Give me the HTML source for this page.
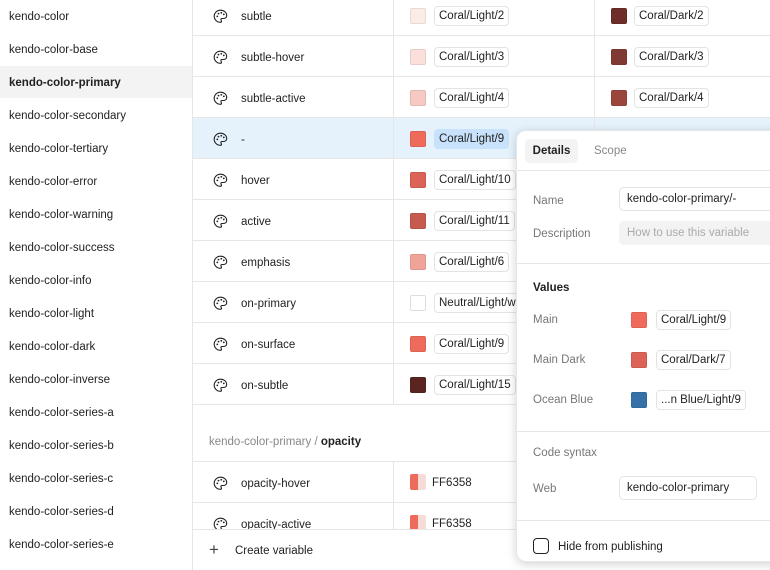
<!DOCTYPE html><html><head><style>
*{box-sizing:border-box;margin:0;padding:0}
body{width:770px;height:570px;overflow:hidden;background:#fff;font-family:"Liberation Sans",sans-serif;font-size:11.5px;line-height:14px;color:#222;position:relative}
.a{position:absolute}
.side{left:0;top:0;width:193px;height:570px;border-right:1px solid #e6e6e6}
.si{position:absolute;left:9px;line-height:14px}
.row{position:absolute;left:193px;width:577px;height:41px;border-bottom:1px solid #e6e6e6}
.row .ic{position:absolute;left:20px;top:14px}
.row .nm{position:absolute;left:48px;top:15px}
.c1{position:absolute;left:200px;top:0;height:41px;border-left:1px solid #e6e6e6}
.c2{position:absolute;left:401px;top:0;height:41px;border-left:1px solid #e6e6e6}
.sw{position:absolute;width:16px;height:16px;border-radius:2px;border:1px solid rgba(0,0,0,.08)}
.chip{position:absolute;height:20px;line-height:18px;padding:0 4px;border:1px solid #e3e3e3;border-radius:4px;background:#fff;white-space:nowrap}
.panel{left:516px;top:130px;width:270px;height:432px;background:#fff;border-radius:10px;box-shadow:0 2px 10px rgba(0,0,0,.18);border:1px solid #e6e6e6}
.lbl{position:absolute;left:16px;color:#777}
.hr{position:absolute;left:0;right:0;height:1px;background:#e6e6e6}
.inp{position:absolute;height:24px;border:1px solid #e3e3e3;border-radius:5px;line-height:22px;padding-left:7px}
</style></head><body>
<svg width="0" height="0" style="position:absolute"><defs><g id="pal"><path d="M7.5 1.2C4 1.2 1.2 4 1.2 7.3c0 3.3 2.8 6 6 6 .9 0 1.3-.5 1.3-1.1 0-.7-.6-.9-.6-1.6 0-.6.5-1.1 1.1-1.1h1.5c2 0 3.2-1.3 3.2-3C13.7 3.6 11 1.2 7.5 1.2z" fill="none" stroke="#222" stroke-width="1.1"/><circle cx="4.3" cy="7.4" r=".9" fill="#222"/><circle cx="5.5" cy="4.6" r=".9" fill="#222"/><circle cx="8.3" cy="3.8" r=".9" fill="#222"/><circle cx="10.8" cy="5.4" r=".9" fill="#222"/></g></defs></svg>
<div class="a side">
<div class="a" style="left:0;top:66px;width:192px;height:32px;background:#f3f3f3"></div>
<div class="si" style="top:10px">kendo-color</div>
<div class="si" style="top:43px">kendo-color-base</div>
<div class="si" style="top:76px;font-weight:bold">kendo-color-primary</div>
<div class="si" style="top:109px">kendo-color-secondary</div>
<div class="si" style="top:142px">kendo-color-tertiary</div>
<div class="si" style="top:175px">kendo-color-error</div>
<div class="si" style="top:208px">kendo-color-warning</div>
<div class="si" style="top:241px">kendo-color-success</div>
<div class="si" style="top:274px">kendo-color-info</div>
<div class="si" style="top:307px">kendo-color-light</div>
<div class="si" style="top:340px">kendo-color-dark</div>
<div class="si" style="top:373px">kendo-color-inverse</div>
<div class="si" style="top:406px">kendo-color-series-a</div>
<div class="si" style="top:439px">kendo-color-series-b</div>
<div class="si" style="top:472px">kendo-color-series-c</div>
<div class="si" style="top:505px">kendo-color-series-d</div>
<div class="si" style="top:538px">kendo-color-series-e</div>
</div>

<div class="row" style="top:-5px"><svg class="ic" width="15" height="15"><use href="#pal"/></svg><span class="nm">subtle</span><div class="c1"></div><div class="c2"></div><div class="sw" style="left:217px;top:13px;background:#fcece8"></div><div class="chip" style="left:241px;top:11px">Coral/Light/2</div><div class="sw" style="left:418px;top:13px;background:#6e2d28"></div><div class="chip" style="left:441px;top:11px">Coral/Dark/2</div></div>
<div class="row" style="top:36px"><svg class="ic" width="15" height="15"><use href="#pal"/></svg><span class="nm">subtle-hover</span><div class="c1"></div><div class="c2"></div><div class="sw" style="left:217px;top:13px;background:#fadfda"></div><div class="chip" style="left:241px;top:11px">Coral/Light/3</div><div class="sw" style="left:418px;top:13px;background:#813a33"></div><div class="chip" style="left:441px;top:11px">Coral/Dark/3</div></div>
<div class="row" style="top:77px"><svg class="ic" width="15" height="15"><use href="#pal"/></svg><span class="nm">subtle-active</span><div class="c1"></div><div class="c2"></div><div class="sw" style="left:217px;top:13px;background:#f6c9c2"></div><div class="chip" style="left:241px;top:11px">Coral/Light/4</div><div class="sw" style="left:418px;top:13px;background:#9a463d"></div><div class="chip" style="left:441px;top:11px">Coral/Dark/4</div></div>
<div class="row" style="top:118px;background:#e5f2fc"><svg class="ic" width="15" height="15"><use href="#pal"/></svg><span class="nm">-</span><div class="c1"></div><div class="c2"></div><div class="sw" style="left:217px;top:13px;background:#ee6b5c"></div><div class="chip" style="left:241px;top:11px;background:#c7e2fa;border-color:#c7e2fa">Coral/Light/9</div></div>
<div class="row" style="top:159px"><svg class="ic" width="15" height="15"><use href="#pal"/></svg><span class="nm">hover</span><div class="c1"></div><div class="c2"></div><div class="sw" style="left:217px;top:13px;background:#dc6357"></div><div class="chip" style="left:241px;top:11px">Coral/Light/10</div></div>
<div class="row" style="top:200px"><svg class="ic" width="15" height="15"><use href="#pal"/></svg><span class="nm">active</span><div class="c1"></div><div class="c2"></div><div class="sw" style="left:217px;top:13px;background:#c65a4f"></div><div class="chip" style="left:241px;top:11px">Coral/Light/11</div></div>
<div class="row" style="top:241px"><svg class="ic" width="15" height="15"><use href="#pal"/></svg><span class="nm">emphasis</span><div class="c1"></div><div class="c2"></div><div class="sw" style="left:217px;top:13px;background:#f0a499"></div><div class="chip" style="left:241px;top:11px">Coral/Light/6</div></div>
<div class="row" style="top:282px"><svg class="ic" width="15" height="15"><use href="#pal"/></svg><span class="nm">on-primary</span><div class="c1"></div><div class="c2"></div><div class="sw" style="left:217px;top:13px;background:#fff;border-color:#ddd"></div><div class="chip" style="left:241px;top:11px">Neutral/Light/w</div></div>
<div class="row" style="top:323px"><svg class="ic" width="15" height="15"><use href="#pal"/></svg><span class="nm">on-surface</span><div class="c1"></div><div class="c2"></div><div class="sw" style="left:217px;top:13px;background:#ee6b5c"></div><div class="chip" style="left:241px;top:11px">Coral/Light/9</div></div>
<div class="row" style="top:364px"><svg class="ic" width="15" height="15"><use href="#pal"/></svg><span class="nm">on-subtle</span><div class="c1"></div><div class="c2"></div><div class="sw" style="left:217px;top:13px;background:#5a2520"></div><div class="chip" style="left:241px;top:11px">Coral/Light/15</div></div>
<div class="a" style="left:209px;top:435px;color:#888">kendo-color-primary / <b style="color:#222">opacity</b></div>
<div class="a" style="left:193px;top:461px;width:577px;height:1px;background:#e6e6e6"></div>
<div class="row" style="top:462px"><svg class="ic" width="15" height="15"><use href="#pal"/></svg><span class="nm">opacity-hover</span><div class="c1"></div><div class="c2"></div><div class="sw" style="left:217px;top:12px;width:16px;background:linear-gradient(90deg,#ee6b5c 50%,#f6dcd8 50%);border:none"></div><span class="a" style="left:239px;top:14px">FF6358</span></div>
<div class="row" style="top:503px"><svg class="ic" width="15" height="15"><use href="#pal"/></svg><span class="nm">opacity-active</span><div class="c1"></div><div class="c2"></div><div class="sw" style="left:217px;top:12px;width:16px;background:linear-gradient(90deg,#ee6b5c 50%,#f6dcd8 50%);border:none"></div><span class="a" style="left:239px;top:14px">FF6358</span></div>
<div class="a" style="left:193px;top:529px;width:577px;height:41px;background:#fff;border-top:1px solid #e6e6e6">
<span class="a" style="left:16px;top:11px;font-size:17px;color:#444;line-height:17px">+</span>
<span class="a" style="left:42px;top:14px">Create variable</span></div>

<div class="a panel">
<div class="a" style="left:8px;top:8px;width:53px;height:24px;background:#f3f3f3;border-radius:5px;font-weight:bold;line-height:24px;text-align:center">Details</div>
<div class="a" style="left:77px;top:13px;color:#888">Scope</div>
<div class="hr" style="top:39px"></div>
<div class="lbl" style="top:63px">Name</div>
<div class="inp" style="left:102px;top:56px;width:170px">kendo-color-primary/-</div>
<div class="lbl" style="top:96px">Description</div>
<div class="inp" style="left:102px;top:90px;width:170px;background:#f3f3f3;border-color:#f3f3f3;color:#aaa">How to use this variable</div>
<div class="hr" style="top:132px"></div>
<div class="a" style="left:16px;top:150px;font-weight:bold">Values</div>
<div class="lbl" style="top:182px">Main</div>
<div class="sw" style="left:114px;top:181px;background:#ee6b5c"></div><div class="chip" style="left:139px;top:179px">Coral/Light/9</div>
<div class="lbl" style="top:222px">Main Dark</div>
<div class="sw" style="left:114px;top:221px;background:#db6357"></div><div class="chip" style="left:139px;top:219px">Coral/Dark/7</div>
<div class="lbl" style="top:262px">Ocean Blue</div>
<div class="sw" style="left:114px;top:261px;background:#3571a8"></div><div class="chip" style="left:139px;top:259px">...n Blue/Light/9</div>
<div class="hr" style="top:300px"></div>
<div class="lbl" style="top:315px">Code syntax</div>
<div class="lbl" style="top:351px">Web</div>
<div class="inp" style="left:102px;top:345px;width:138px">kendo-color-primary</div>
<div class="hr" style="top:389px"></div>
<div class="a" style="left:16px;top:407px;width:16px;height:16px;border:1.3px solid #222;border-radius:4px"></div>
<div class="a" style="left:41px;top:409px">Hide from publishing</div>
</div>
</body></html>
